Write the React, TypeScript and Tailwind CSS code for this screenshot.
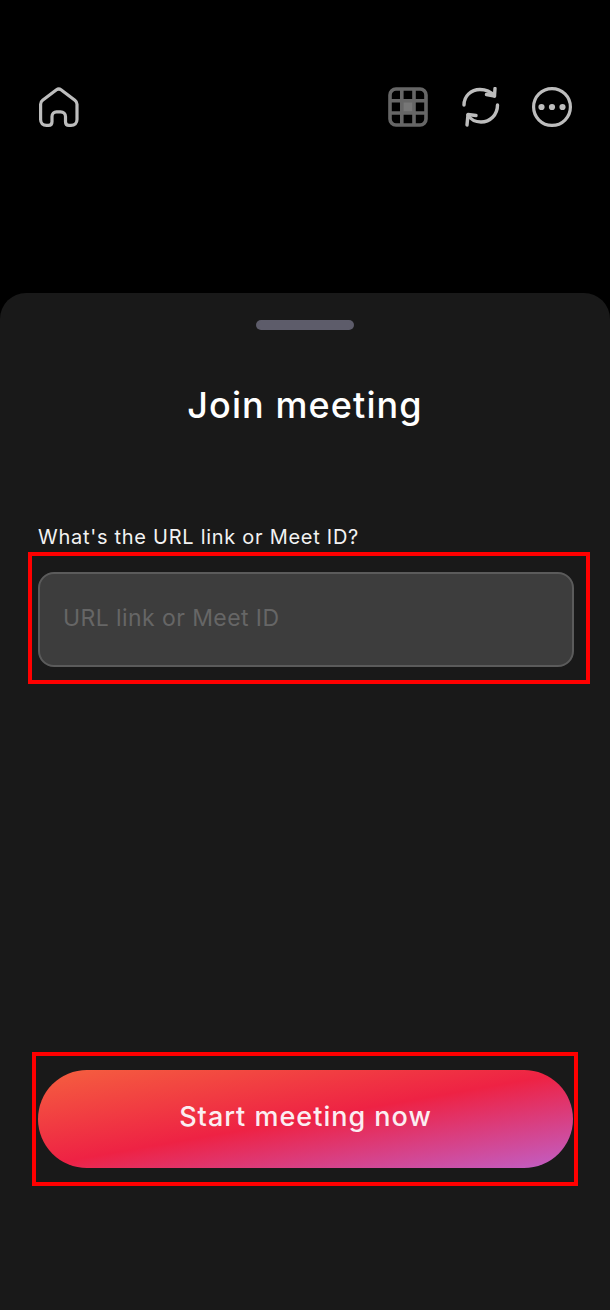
export default function App() {
  return (
    <div className="h-[1310px] w-[610px] overflow-hidden bg-black font-['Inter',sans-serif]">
      <header className="flex h-[293px] items-start pl-[39px] pr-[38px] pt-[87px]">
        <svg width="40" height="40" viewBox="0 0 40 40" fill="none" stroke="#bdbdbd" strokeWidth="3.2" strokeLinejoin="round" strokeLinecap="round">
          <path d="M17.5 2.8 3.6 13.2C2.3 14.2 1.6 15.6 1.6 17.2V32.5C1.6 36 3.9 38.4 7.5 38.4H9.5C11.7 38.4 13 37 13 34.8V29.5C13 26.6 15 24.8 17.5 24.8H21.5C24.5 24.8 26.5 26.6 26.5 29.5V34.8C26.5 37 27.8 38.4 30 38.4H32C35.6 38.4 38 36 38 32.5V17.2C38 15.6 37.2 14.2 35.9 13.2L22 2.8C20.6 1.8 18.9 1.8 17.5 2.8Z" />
        </svg>
        <div className="ml-auto flex items-center">
          <svg width="40" height="40" viewBox="0 0 40 40" fill="none" stroke="#666666" strokeWidth="3.6">
            <rect x="13.8" y="13.8" width="12.4" height="12.4" fill="#777777" stroke="none" />
            <rect x="2" y="2" width="36" height="36" rx="6" />
            <path d="M13.8 2V38M26 2V38M2 13.8H38M2 26H38" />
          </svg>
          <svg className="ml-[34px]" width="38" height="40" viewBox="0 0 38 40" fill="none" stroke="#bdbdbd" strokeWidth="3.4" strokeLinecap="round" strokeLinejoin="round">
            <path d="M2 18C2 9 9 2.5 18 2.5C24 2.5 29 5 32.5 9" />
            <path d="M33 1.5L32.5 9L24.5 7.5" />
            <path d="M35.5 18C35.5 28 28 35 19 35C13 35 9 33 6 28" />
            <path d="M5 38L6 27.5L14 28.5" />
          </svg>
          <svg className="ml-[32px]" width="40" height="40" viewBox="0 0 40 40" fill="none">
            <circle cx="20" cy="20" r="18.4" stroke="#bdbdbd" strokeWidth="3.2" />
            <circle cx="9.5" cy="20" r="3.1" fill="#bdbdbd" />
            <circle cx="20" cy="20" r="3.1" fill="#bdbdbd" />
            <circle cx="30.5" cy="20" r="3.1" fill="#bdbdbd" />
          </svg>
        </div>
      </header>

      <main className="flex h-[1017px] flex-col rounded-t-[26px] bg-[#191919]">
        <div className="mx-auto mt-[27px] h-[10px] w-[98px] rounded-full bg-[#5d5c6a]" />
        <h1 className="mt-[51px] h-[48px] text-center text-[36px] font-medium leading-[48px] tracking-[1.1px] text-white">Join meeting</h1>
        <label className="ml-[38px] mt-[94px] h-[28px] text-[20px] leading-[28px] tracking-[0.72px] text-[#f2f2f2]">What's the URL link or Meet ID?</label>
        <div className="ml-[28px] mt-[1px] h-[132px] w-[562px] border-4 border-[#ff0000] pl-[6px] pt-[16px]">
          <div className="flex h-[95px] w-[536px] items-center rounded-[16px] border-2 border-[#5b5b5b] bg-[#3d3d3d] pb-[3px] pl-[23px] text-[23px] tracking-[0.42px] text-[#666666]">
            URL link or Meet ID
          </div>
        </div>
        <div className="ml-[32px] mt-[368px] h-[134px] w-[546px] border-4 border-[#ff0000] pl-[2px] pt-[14px]">
          <button className="flex h-[98px] w-[535px] items-center justify-center rounded-full bg-[linear-gradient(170deg,#f5603f_0%,#ee2244_50%,#c060c8_100%)] pb-[3px] text-[27px] font-medium tracking-[1px] text-[#fbeef2]">
            Start meeting now
          </button>
        </div>
      </main>
    </div>
  );
}
